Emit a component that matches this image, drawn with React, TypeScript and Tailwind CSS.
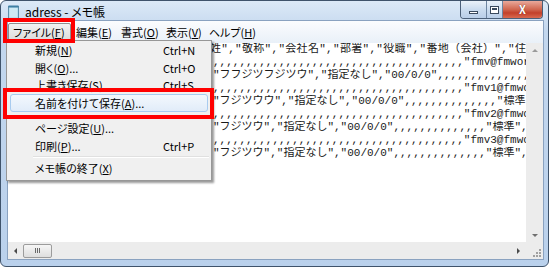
import React from "react";

const COMMA = ",";

function Key({ k }: { k: string }) {
  return <span className="underline underline-offset-[1px]">{k}</span>;
}

function MenuLabel({ label, k, tail = "" }: { label: string; k: string; tail?: string }) {
  return (
    <span>
      {label}(<Key k={k} />){tail}
    </span>
  );
}

// the start of each line sits under the open File menu, so only the part right of it is written out
const ROWS: { pad: string; parts: React.ReactNode }[] = [
  {
    pad: "w-[202px]",
    parts: (
      <span className="tracking-[0.3px]">姓","敬称","会社名","部署","役職","番地（会社）","住所","</span>
    ),
  },
  {
    pad: "w-[205px]",
    parts: <span>{COMMA.repeat(38)}"fmv@fmworld.net",</span>,
  },
  {
    pad: "w-[205px]",
    parts: <span>"フフジツフジツウ","指定なし","00/0/0"{COMMA.repeat(18)}</span>,
  },
  {
    pad: "w-[205px]",
    parts: <span>{COMMA.repeat(38)}"fmv1@fmworld.net",</span>,
  },
  {
    pad: "w-[205px]",
    parts: <span>"フジツウウ","指定なし","00/0/0"{COMMA.repeat(14)}"標準","</span>,
  },
  {
    pad: "w-[205px]",
    parts: <span>{COMMA.repeat(38)}"fmv2@fmworld.net",</span>,
  },
  {
    pad: "w-[205px]",
    parts: <span>"フジツウ","指定なし","00/0/0"{COMMA.repeat(14)}"標準","</span>,
  },
  {
    pad: "w-[205px]",
    parts: <span>{COMMA.repeat(38)}"fmv3@fmworld.net",</span>,
  },
  {
    pad: "w-[205px]",
    parts: <span>"フジツウ","指定なし","00/0/0"{COMMA.repeat(14)}"標準","</span>,
  },
];

function NotepadIcon() {
  return (
    <svg width="11" height="14" viewBox="0 0 11 14">
      <rect x="0.5" y="1.5" width="10" height="12" fill="#a9d4e6" stroke="#5f8ea8" />
      <rect x="1.5" y="2.5" width="8" height="10" fill="#cfeaf4" />
      <rect x="0.5" y="0.5" width="10" height="2" fill="#3f7fa3" />
    </svg>
  );
}

function CaptionButtons() {
  return (
    <div className="flex h-[18px] overflow-hidden rounded-b-[4px] border border-t-0 border-[#4b5f78]">
      <div className="flex w-[26px] items-center justify-center border-r border-[#6d84a0] bg-[linear-gradient(#eaf1f9,#cbdcef_50%,#b9cee8)]">
        <div className="mt-[5px] h-[3px] w-[9px] border border-[#3a4a5e] bg-white" />
      </div>
      <div className="flex w-[16px] items-center justify-center border-r border-[#6d84a0] bg-[linear-gradient(#eaf1f9,#cbdcef_50%,#b9cee8)]">
        <div className="h-[8px] w-[9px] border border-[#3a4a5e] bg-white p-[1px]">
          <div className="h-full w-full border-t-2 border-[#3a4a5e] bg-white" />
        </div>
      </div>
      <div className="flex w-[39px] items-center justify-center bg-[linear-gradient(#e9a99b,#d0664f_50%,#c2402a_70%,#d9694f)]">
        <span className="text-[11px] font-bold leading-none text-white [text-shadow:0_0_1px_#5a1a10]">X</span>
      </div>
    </div>
  );
}

function MenuItem({
  children,
  shortcut,
  h = "h-[18px]",
  active = false,
}: {
  children: React.ReactNode;
  shortcut?: string;
  h?: string;
  active?: boolean;
}) {
  return (
    <div className={`${h} relative flex items-center`}>
      {active && (
        <div className="absolute inset-x-[3px] inset-y-0 rounded-[3px] border border-[#a8cbef] bg-[linear-gradient(#f3f8fd,#e1ecf9)]" />
      )}
      <div className="relative flex w-full items-center pl-[28px] pr-[16px]">
        <span className="flex-1">{children}</span>
        {shortcut && <span className="w-[32px]">{shortcut}</span>}
      </div>
    </div>
  );
}

function Separator({ h }: { h: string }) {
  return (
    <div className={`${h} flex flex-col justify-center pl-[26px] pr-[2px]`}>
      <div className="h-px bg-[#e0e0e0]" />
      <div className="h-px bg-white" />
    </div>
  );
}

function FileMenu() {
  return (
    <div className="absolute left-[6px] top-[40px] h-[141px] w-[206px] border border-[#979797] bg-[#f0f0f0] text-[11px] text-black shadow-[2px_2px_2px_rgba(0,0,0,0.4)] [font-feature-settings:'palt']">
      <MenuItem shortcut="Ctrl+N">
        <MenuLabel label="新規" k="N" />
      </MenuItem>
      <MenuItem shortcut="Ctrl+O">
        <MenuLabel label="開く" k="O" tail="..." />
      </MenuItem>
      <MenuItem shortcut="Ctrl+S" h="h-[17px]">
        <MenuLabel label="上書き保存" k="S" />
      </MenuItem>
      <MenuItem active>
        <MenuLabel label="名前を付けて保存" k="A" tail="..." />
      </MenuItem>
      <Separator h="h-[7px]" />
      <MenuItem>
        <MenuLabel label="ページ設定" k="U" tail="..." />
      </MenuItem>
      <MenuItem shortcut="Ctrl+P">
        <MenuLabel label="印刷" k="P" tail="..." />
      </MenuItem>
      <Separator h="h-[4px]" />
      <MenuItem>
        <MenuLabel label="メモ帳の終了" k="X" />
      </MenuItem>
    </div>
  );
}

function ScrollArrow({ dir }: { dir: "up" | "down" | "left" | "right" }) {
  const shape = {
    up: "border-x-[3px] border-b-[3px] border-x-transparent border-b-[#9a9a9a]",
    down: "border-x-[3px] border-t-[3px] border-x-transparent border-t-[#6f6f6f]",
    left: "border-y-[3px] border-r-[3px] border-y-transparent border-r-[#4a4a4a]",
    right: "border-y-[3px] border-l-[3px] border-y-transparent border-l-[#4a4a4a]",
  }[dir];
  return <div className={`h-0 w-0 ${shape}`} />;
}

export default function App() {
  return (
    <div className="relative h-[267px] w-[549px] overflow-hidden bg-white font-['Noto_Sans_CJK_JP',sans-serif]">
      <div className="flex h-full w-full flex-col rounded-[6px] border border-[#3f536b] bg-[linear-gradient(#dce9f7,#c3d7ee_30px,#bad1ec)]">
        {/* title bar */}
        <div className="flex h-[19px] items-start">
          <div className="flex items-center gap-[6px] pl-[7px] pt-[4px]">
            <NotepadIcon />
            <span className="text-[12px] leading-none text-black [font-feature-settings:'palt']">
              adress - メモ帳
            </span>
          </div>
          <div className="ml-auto mr-[5px]">
            <CaptionButtons />
          </div>
        </div>

        {/* client */}
        <div className="mb-[6px] ml-[6px] mr-[4px] flex min-h-0 flex-1 flex-col border border-[#8aa2c0] bg-white">
          {/* menu bar */}
          <div className="flex h-[22px] items-center bg-[linear-gradient(#fbfcfe,#e9f0f8)] text-[11px] text-black [font-feature-settings:'palt']">
            <div className="flex h-[18px] w-[63px] shrink-0 items-center rounded-[2px] border border-[#8e8f8f] bg-[linear-gradient(#f2f2f2,#dcdcdc)] pl-[4px]">
              <MenuLabel label="ファイル" k="F" />
            </div>
            <span className="w-[45px] shrink-0 pl-[5px]">
              <MenuLabel label="編集" k="E" />
            </span>
            <span className="w-[45px] shrink-0 pl-[5px]">
              <MenuLabel label="書式" k="O" />
            </span>
            <span className="w-[45px] shrink-0 pl-[5px]">
              <MenuLabel label="表示" k="V" />
            </span>
            <span className="w-[50px] shrink-0 pl-[3px]">
              <MenuLabel label="ヘルプ" k="H" />
            </span>
          </div>

          <div className="flex min-h-0 flex-1">
            <div className="flex min-w-0 flex-1 flex-col">
              {/* text */}
              <div className="min-h-0 flex-1 overflow-hidden font-['Liberation_Mono','Noto_Sans_CJK_JP',monospace] text-[11px] leading-[13px] text-[#1a1a1a]">
                {ROWS.map((r, i) => (
                  <div key={i} className="flex h-[13px] items-center overflow-hidden whitespace-nowrap">
                    <span className={`${r.pad} shrink-0`} />
                    {r.parts}
                  </div>
                ))}
              </div>
              {/* horizontal scrollbar */}
              <div className="flex h-[17px] shrink-0 items-center bg-[#ececec]">
                <div className="flex h-full w-[15px] items-center justify-center">
                  <ScrollArrow dir="left" />
                </div>
                <div className="flex h-[14px] w-[29px] items-center justify-center rounded-[2px] border border-[#9c9c9c] bg-[linear-gradient(#f6f6f6,#dedede)]">
                  <div className="flex gap-[1px]">
                    <div className="h-[5px] w-px bg-[#6a6a6a]" />
                    <div className="h-[5px] w-px bg-[#6a6a6a]" />
                    <div className="h-[5px] w-px bg-[#6a6a6a]" />
                  </div>
                </div>
                <div className="flex-1" />
                <div className="flex h-full w-[15px] items-center justify-center">
                  <ScrollArrow dir="right" />
                </div>
              </div>
            </div>
            {/* vertical scrollbar */}
            <div className="flex w-[17px] shrink-0 flex-col bg-[#ececec]">
              <div className="flex h-[14px] items-center justify-center">
                <ScrollArrow dir="up" />
              </div>
              <div className="flex-1" />
              <div className="flex h-[14px] items-center justify-center">
                <ScrollArrow dir="down" />
              </div>
              <div className="flex h-[17px] items-end justify-end p-[2px]">
                <div className="grid grid-cols-3 gap-[1px]">
                  <div />
                  <div />
                  <div className="h-[2px] w-[2px] bg-[#a0a0a0]" />
                  <div />
                  <div className="h-[2px] w-[2px] bg-[#a0a0a0]" />
                  <div className="h-[2px] w-[2px] bg-[#a0a0a0]" />
                  <div className="h-[2px] w-[2px] bg-[#a0a0a0]" />
                  <div className="h-[2px] w-[2px] bg-[#a0a0a0]" />
                  <div className="h-[2px] w-[2px] bg-[#a0a0a0]" />
                </div>
              </div>
            </div>
          </div>
        </div>
      </div>

      <FileMenu />

      {/* highlight frames */}
      <div className="absolute left-[3px] top-[18px] h-[25px] w-[72px] border-4 border-[#ff0000]" />
      <div className="absolute left-[3px] top-[88px] h-[31px] w-[211px] border-4 border-[#ff0000]" />
    </div>
  );
}
